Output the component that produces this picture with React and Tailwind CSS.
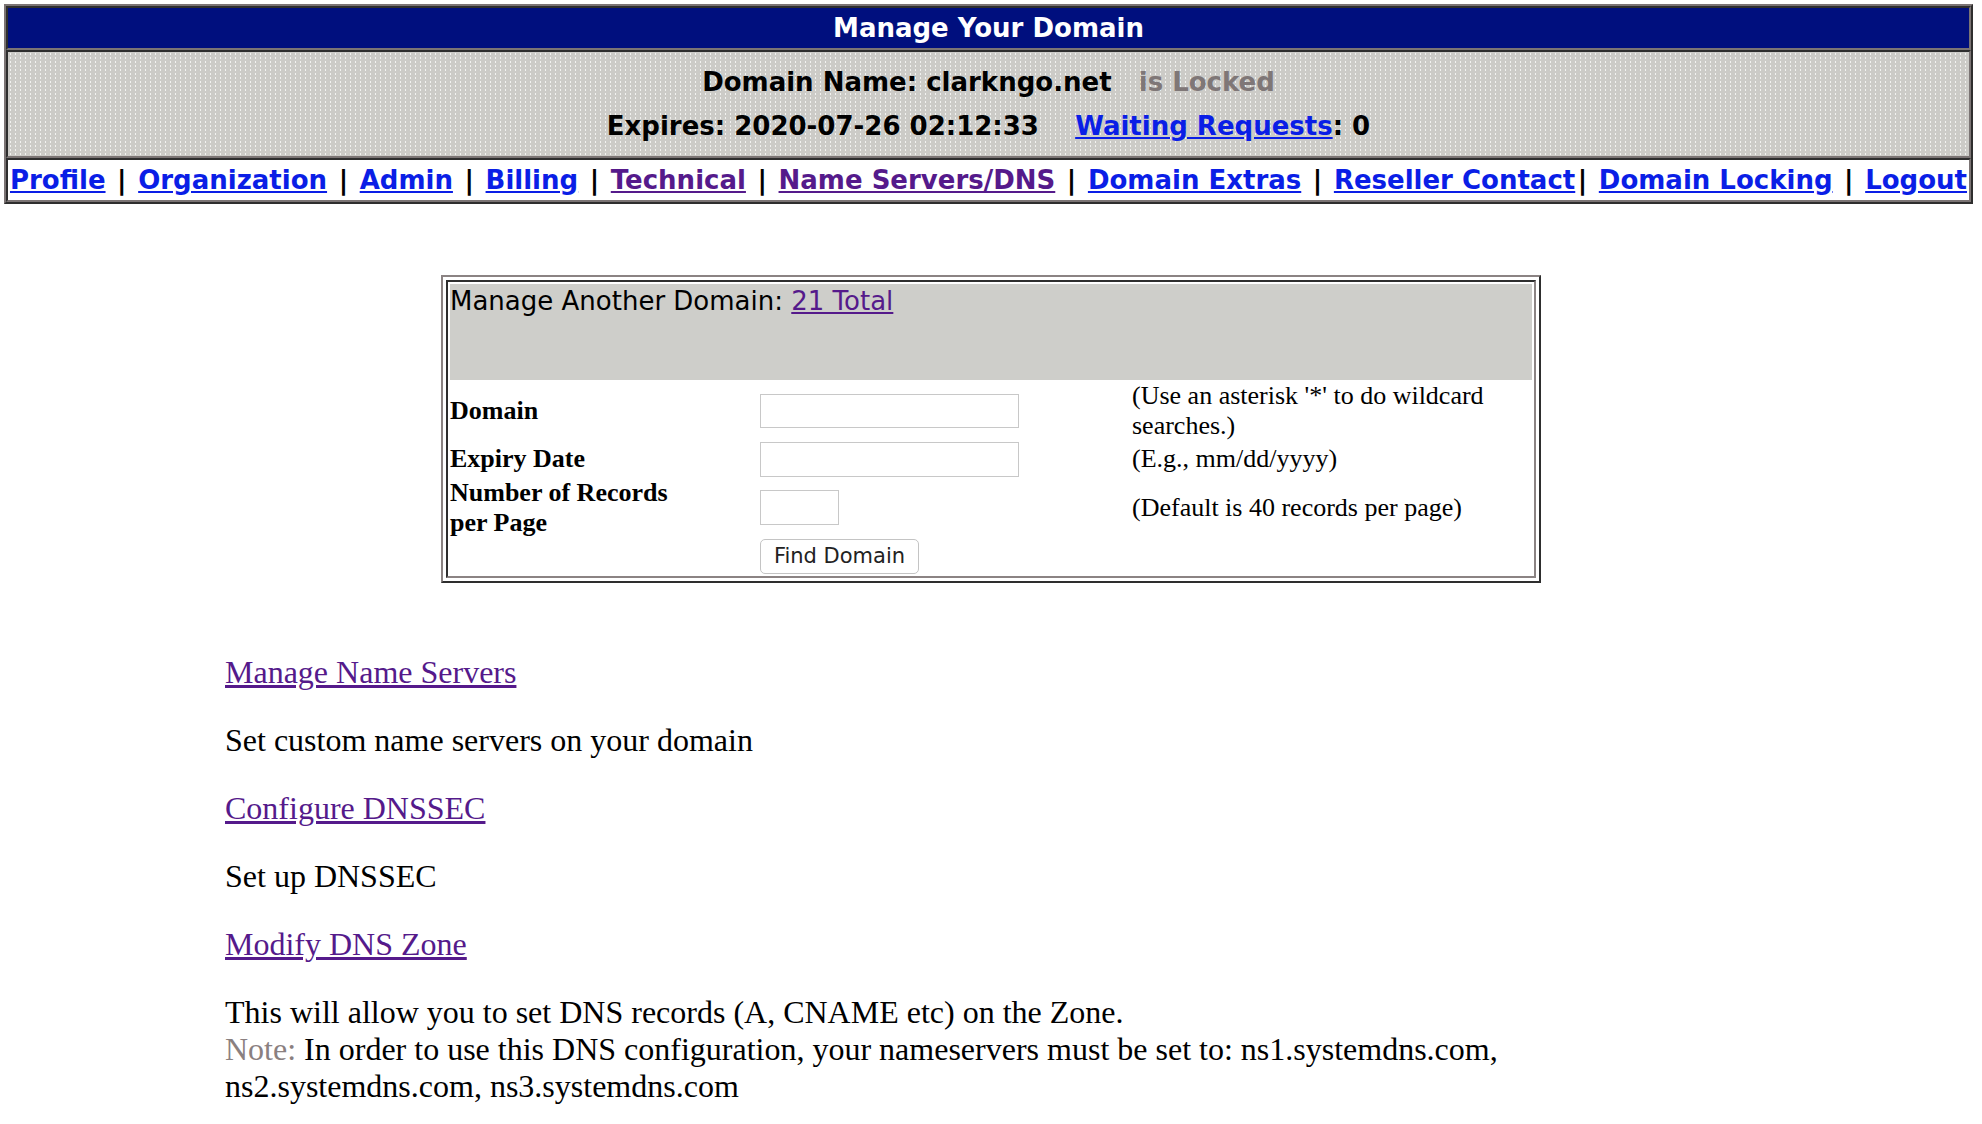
import React from "react";

function NavLink({ children, visited }) {
  return (
    <a
      href="#"
      className={visited ? "text-[#551a8b] underline" : "text-[#0a1ee6] underline"}
    >
      {children}
    </a>
  );
}

function Sep({ noLead }) {
  return (
    <span>
      {noLead ? "" : " "}
      <span className="px-[2.5px]">|</span>{" "}
    </span>
  );
}

export default function App() {
  return (
    <div className="min-h-screen bg-white pt-[4px] pb-[20px]">
      {/* Top header table */}
      <div className="ml-[4px] w-[1969px] border-2 border-t-[#7b7474] border-l-[#7b7474] border-b-[#2e2e2e] border-r-[#2e2e2e] font-['DejaVu_Sans',sans-serif] font-bold text-[26px] leading-[30px]">
        <div className="h-[44px] border-2 border-t-[#2e2e2e] border-l-[#2e2e2e] border-b-[#7b7474] border-r-[#7b7474] bg-[#000f7e] text-white flex items-center justify-center">
          Manage Your Domain
        </div>
        <div className="h-[108px] border-2 border-t-[#2e2e2e] border-l-[#2e2e2e] border-b-[#7b7474] border-r-[#7b7474] bg-[#cccbc7] bg-[radial-gradient(circle,#f2f2f0_0.6px,transparent_0.8px)] bg-[length:5px_4px] flex flex-col justify-center items-center text-black">
          <div className="h-[44px] flex items-center whitespace-pre">
            <span>Domain Name: clarkngo.net</span>
            <span>{"   "}</span>
            <span className="text-[#7f7777]">is Locked</span>
          </div>
          <div className="h-[44px] flex items-center whitespace-pre">
            <span>Expires: 2020-07-26 02:12:33</span>
            <span>{"    "}</span>
            <a href="#" className="text-[#0a1ee6] underline">Waiting Requests</a>
            <span>: 0</span>
          </div>
        </div>
        <div className="h-[44px] border-2 border-t-[#2e2e2e] border-l-[#2e2e2e] border-b-[#7b7474] border-r-[#7b7474] bg-white flex items-center justify-center whitespace-pre text-black">
          <NavLink>Profile</NavLink>
          <Sep />
          <NavLink>Organization</NavLink>
          <Sep />
          <NavLink>Admin</NavLink>
          <Sep />
          <NavLink>Billing</NavLink>
          <Sep />
          <NavLink visited>Technical</NavLink>
          <Sep />
          <NavLink visited>Name Servers/DNS</NavLink>
          <Sep />
          <NavLink>Domain Extras</NavLink>
          <Sep />
          <NavLink>Reseller Contact</NavLink>
          <Sep noLead />
          <NavLink>Domain Locking</NavLink>
          <Sep />
          <NavLink>Logout</NavLink>
        </div>
      </div>

      {/* Manage another domain box */}
      <div className="mx-auto mt-[71px] w-[1100px] border-2 border-t-[#8b8383] border-l-[#8b8383] border-b-[#2e2e2e] border-r-[#2e2e2e] p-[3px] bg-white">
        <div className="border-2 border-t-[#2e2e2e] border-l-[#2e2e2e] border-b-[#8b8383] border-r-[#8b8383] p-[2px]">
          <div className="h-[96px] bg-[#cececa] pt-[2px] font-['DejaVu_Sans',sans-serif] text-[26px] leading-[30px] text-black">
            Manage Another Domain:{" "}
            <a href="#" className="text-[#551a8b] underline">21 Total</a>
          </div>
          <div className="grid grid-cols-[310px_372px_1fr] grid-rows-[61px_36px_61px_36px] items-center font-['Liberation_Serif',serif] text-[26px] leading-[30px] text-black">
            <div className="font-bold">Domain</div>
            <div>
              <input className="block w-[259px] h-[34px] border border-[#c8c8c8] bg-white outline-none" />
            </div>
            <div>(Use an asterisk '*' to do wildcard searches.)</div>

            <div className="font-bold">Expiry Date</div>
            <div>
              <input className="block w-[259px] h-[35px] border border-[#c8c8c8] bg-white outline-none" />
            </div>
            <div>(E.g., mm/dd/yyyy)</div>

            <div className="font-bold">Number of Records<br />per Page</div>
            <div>
              <input className="block w-[79px] h-[35px] border border-[#c8c8c8] bg-white outline-none" />
            </div>
            <div>(Default is 40 records per page)</div>

            <div></div>
            <div>
              <button className="block w-[159px] h-[35px] rounded-[5px] border border-[#c4c4c4] bg-white font-['DejaVu_Sans',sans-serif] text-[21px] leading-[24px] text-[#222222]">
                Find Domain
              </button>
            </div>
            <div></div>
          </div>
        </div>
      </div>

      {/* Bottom links */}
      <div className="ml-[225px] mt-[71px] w-[1400px] font-['Liberation_Serif',serif] text-[32px] leading-[36px] text-black">
        <p className="mb-[32px]">
          <a href="#" className="text-[#551a8b] underline">Manage Name Servers</a>
        </p>
        <p className="mb-[32px]">Set custom name servers on your domain</p>
        <p className="mb-[32px]">
          <a href="#" className="text-[#551a8b] underline">Configure DNSSEC</a>
        </p>
        <p className="mb-[32px]">Set up DNSSEC</p>
        <p className="mb-[32px]">
          <a href="#" className="text-[#551a8b] underline">Modify DNS Zone</a>
        </p>
        <p className="leading-[37px]">
          This will allow you to set DNS records (A, CNAME etc) on the Zone.
          <br />
          <span className="text-[#8a8080]">Note: </span>In order to use this DNS configuration, your nameservers must be set to: ns1.systemdns.com, ns2.systemdns.com, ns3.systemdns.com
        </p>
      </div>
    </div>
  );
}
